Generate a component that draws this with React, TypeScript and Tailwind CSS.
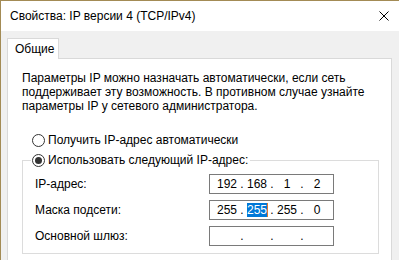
import React from "react";

const font = { fontFamily: '"Liberation Sans", Arial, sans-serif' };

function IpBox({ parts, selected }: { parts: string[]; selected?: number }) {
  return (
    <div className="flex h-[20px] w-[125px] items-center border border-[#7a7a7a] bg-white pl-[5px]">
      {parts.map((p, i) => (
        <React.Fragment key={i}>
          <div className="flex w-[24px] justify-center">
            {selected === i ? (
              <span className="relative flex h-[14px] items-center bg-[#0078d7] leading-[14px] text-white">
                {p}
                <span className="absolute right-[-1px] top-0 h-[14px] w-px bg-[#e0782c]" />
              </span>
            ) : (
              <span>{p}</span>
            )}
          </div>
          {i < 3 && <div className="flex w-[6px] justify-center">.</div>}
        </React.Fragment>
      ))}
    </div>
  );
}

function Radio({ checked }: { checked?: boolean }) {
  return (
    <span className="flex h-[13px] w-[13px] items-center justify-center rounded-full border border-[#333] bg-white">
      {checked && <span className="h-[7px] w-[7px] rounded-full bg-[#333]" />}
    </span>
  );
}

export default function App() {
  return (
    <div
      className="h-[260px] w-[399px] overflow-hidden border-l border-t border-[#a38b55] bg-[#f0f0f0] text-[12px] leading-[14px] text-black"
      style={font}
    >
      <div className="flex h-[30px] items-center justify-between bg-white pl-[9px] pr-[10px]">
        <span>Свойства: IP версии 4 (TCP/IPv4)</span>
        <svg width="10" height="10" viewBox="0 0 10 10" className="block">
          <path d="M0.5 0.5 L9.5 9.5 M9.5 0.5 L0.5 9.5" stroke="#000" strokeWidth="1" />
        </svg>
      </div>
      <div className="pl-[6px] pt-[7px]">
        <div className="relative z-10 mb-[-1px] flex h-[21px] w-[52px] items-center border border-b-0 border-[#d9d9d9] bg-white pl-[7px]">
          Общие
        </div>
        <div className="h-[220px] w-[385px] border border-[#d9d9d9] bg-white pl-[14px] pr-[12px] pt-[12px]">
          <p>
            Параметры IP можно назначать автоматически, если сеть
            <br />
            поддерживает эту возможность. В противном случае узнайте
            <br />
            параметры IP у сетевого администратора.
          </p>
          <div className="mt-[20px] flex h-[14px] items-center gap-[3px] pl-[10px]">
            <Radio />
            <span>Получить IP-адрес автоматически</span>
          </div>
          <fieldset className="mt-[6px] w-[357px] border border-[#dcdcdc] px-[12px] pb-[7px]">
            <legend className="ml-[-4px] flex h-[14px] items-center gap-[3px] bg-white pl-[1px] pr-[2px]">
              <Radio checked />
              <span>Использовать следующий IP-адрес:</span>
            </legend>
            <div className="mt-[7px] flex flex-col gap-[6px]">
              <div className="flex items-center justify-between pr-[32px]">
                <span>IP-адрес:</span>
                <IpBox parts={["192", "168", "1", "2"]} />
              </div>
              <div className="flex items-center justify-between pr-[32px]">
                <span>Маска подсети:</span>
                <IpBox parts={["255", "255", "255", "0"]} selected={1} />
              </div>
              <div className="flex items-center justify-between pr-[32px]">
                <span>Основной шлюз:</span>
                <IpBox parts={["", "", "", ""]} />
              </div>
            </div>
          </fieldset>
        </div>
      </div>
    </div>
  );
}
